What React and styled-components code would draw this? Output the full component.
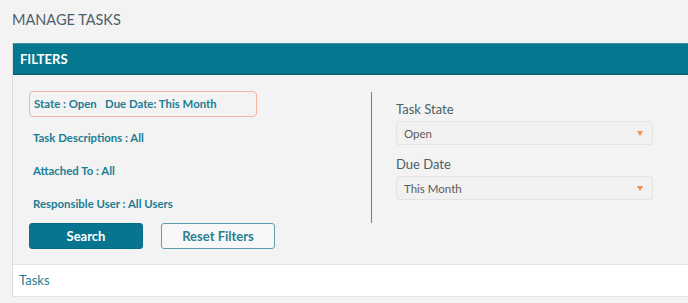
import React from 'react';
import styled, {createGlobalStyle} from 'styled-components';

var GlobalStyle = createGlobalStyle`
  body {
    margin: 0;
    background: #f3f3f3;
    font-family: Lato, "Open Sans", sans-serif;
  }
`;

var App = () => {
  // left side: active filter summary + buttons, right side: dropdowns
  return (
    <Page>
      <GlobalStyle />
      <Title>MANAGE TASKS</Title>
      <Panel>
        <PanelHeader>FILTERS</PanelHeader>
        <FilterBody>
          <SummaryColumn>
            <ActiveChip>State : Open   Due Date: This Month</ActiveChip>
            <SummaryRow>Task Descriptions : All</SummaryRow>
            <SummaryRow>Attached To : All</SummaryRow>
            <SummaryRow>Responsible User : All Users</SummaryRow>
            <ButtonRow>
              <Button primary>Search</Button>
              <Button>Reset Filters</Button>
            </ButtonRow>
          </SummaryColumn>
          <FieldColumn>
            <FieldLabel>Task State</FieldLabel>
            <Select>
              <span>Open</span>
              <Caret />
            </Select>
            <FieldLabel spaced>Due Date</FieldLabel>
            <Select>
              <span>This Month</span>
              <Caret />
            </Select>
          </FieldColumn>
        </FilterBody>
        <TasksRow>Tasks</TasksRow>
      </Panel>
    </Page>
  );
};

// styled components
var Page = styled.div`
  padding-left: 12px;
`;

var Title = styled.h1`
  margin: 0 0 13px 0;
  padding-top: 10px;
  font-size: 14.5px;
  line-height: 20px;
  font-weight: 400;
  color: #4b6069;
`;

var Panel = styled.div`
  border-left: 1px solid #dcdcdc;
`;

var PanelHeader = styled.div`
  height: 29px;
  line-height: 30px;
  padding-left: 7px;
  background: #05778f;
  border-top: 1px solid #3f95a8;
  border-bottom: 2px solid #046679;
  color: #fff;
  font-size: 13px;
  font-weight: 700;
`;

var FilterBody = styled.div`
  display: grid;
  grid-template-columns: 358px 1fr;
  background: #f3f3f3;
  border-bottom: 1px solid #e2e2e2;
  height: 189px;
`;

var SummaryColumn = styled.div`
  padding: 16px 0 0 16px;
`;

var ActiveChip = styled.div`
  width: 228px;
  height: 26px;
  box-sizing: border-box;
  border: 1px solid #f2b597;
  border-radius: 4px;
  padding-left: 4px;
  line-height: 24px;
  font-size: 11.4px;
  font-weight: 700;
  color: #1b7d93;
  margin-bottom: 4px;
  white-space: pre;
`;

var SummaryRow = styled.div`
  height: 33px;
  line-height: 33px;
  padding-left: 4px;
  font-size: 11.4px;
  font-weight: 700;
  color: #1b7d93;
`;

var ButtonRow = styled.div`
  display: flex;
  gap: 18px;
  margin-top: 3px;
`;

var Button = styled.button`
  width: 114px;
  height: 26px;
  box-sizing: border-box;
  border-radius: 3px;
  font-family: Lato, sans-serif;
  font-size: 13px;
  font-weight: 700;
  border: 1px solid ${p => (p.primary ? '#066f87' : '#5d9fb1')};
  background: ${p => (p.primary ? '#07758f' : '#f7f7f7')};
  color: ${p => (p.primary ? '#fff' : '#2a7f94')};
`;

var FieldColumn = styled.div`
  margin-top: 17px;
  height: 131px;
  box-sizing: border-box;
  border-left: 1px solid #4a8fa1;
  padding: 8px 0 0 24px;
`;

var FieldLabel = styled.div`
  margin-top: ${p => (p.spaced ? '10px' : '0')};
  margin-bottom: 3px;
  line-height: 18px;
  font-size: 13px;
  color: #4b6069;
`;

var Select = styled.div`
  width: 257px;
  height: 24px;
  box-sizing: border-box;
  display: flex;
  align-items: center;
  justify-content: space-between;
  padding: 0 9px 0 7px;
  background: #f1f1f1;
  border: 1px solid #e3e3e3;
  border-radius: 3px;
  font-size: 11.5px;
  color: #5a5a5a;
`;

var Caret = styled.span`
  width: 0;
  height: 0;
  border-left: 3.5px solid transparent;
  border-right: 3.5px solid transparent;
  border-top: 5px solid #f58a4b;
`;

var TasksRow = styled.div`
  height: 31px;
  line-height: 31px;
  padding-left: 6px;
  background: #fff;
  border-bottom: 1px solid #e3e3e3;
  font-size: 13px;
  color: #1f7d94;
`;

export default App;
